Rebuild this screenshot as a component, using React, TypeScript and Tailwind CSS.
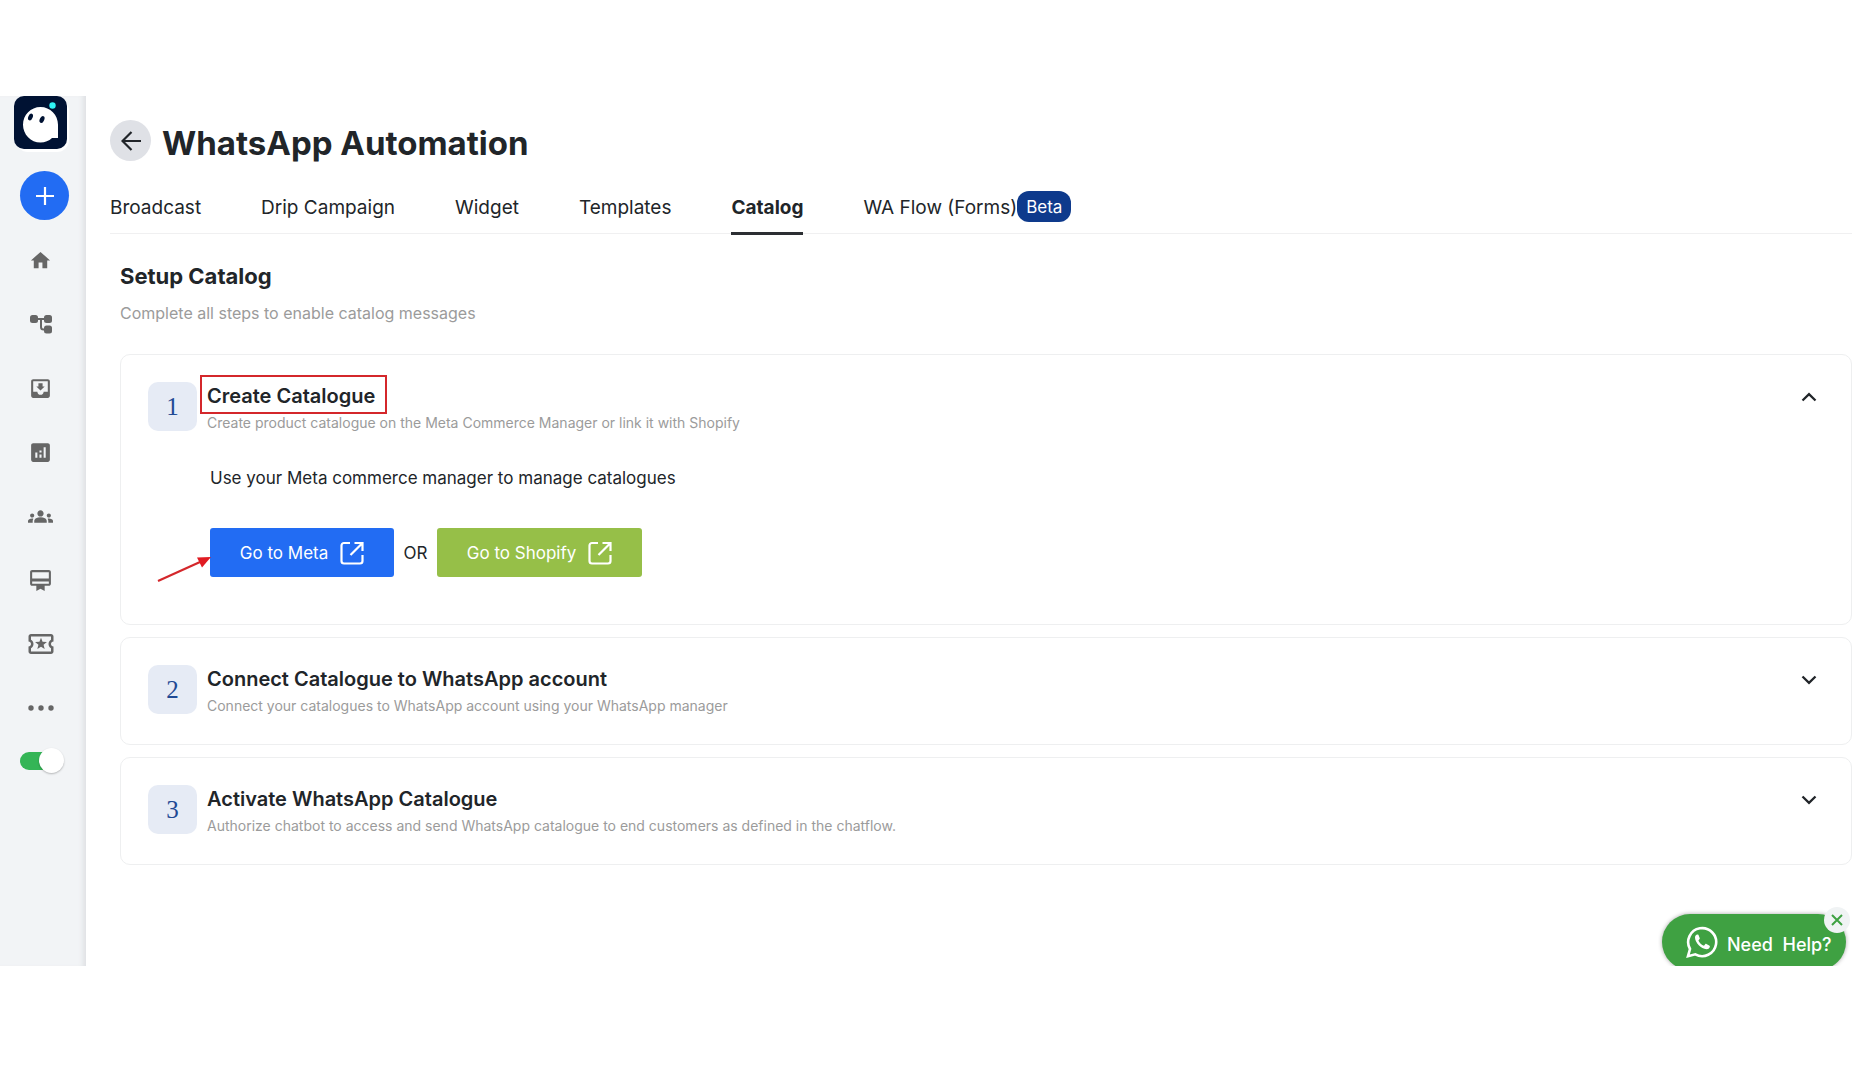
import { useState } from "react";
import {
  MdAnalytics,
  MdGroups,
  MdHome,
  MdOutlineCardMembership,
  MdOutlineLocalActivity,
  MdMoveToInbox,
} from "react-icons/md";

const tabs = ["Broadcast", "Drip Campaign", "Widget", "Templates", "Catalog", "WA Flow (Forms)"];

const steps = [
  {
    title: "Create Catalogue",
    text: "Create product catalogue on the Meta Commerce Manager or link it with Shopify",
  },
  {
    title: "Connect Catalogue to WhatsApp account",
    text: "Connect your catalogues to WhatsApp account using your WhatsApp manager",
  },
  {
    title: "Activate WhatsApp Catalogue",
    text: "Authorize chatbot to access and send WhatsApp catalogue to end customers as defined in the chatflow.",
  },
];

function FlowIcon() {
  return (
    <svg viewBox="0 0 22 20" className="w-[22px] h-5" fill="#666">
      <rect x="0" y="1" width="8" height="8" rx="2.500" />
      <rect x="14" y="1" width="8" height="8" rx="2.500" />
      <rect x="14" y="11.500" width="8" height="8" rx="2.500" />
      <path d="M7 5h8M11 5v8q0 2.500 2.500 2.500h1.500" fill="none" stroke="#666" strokeWidth="2" />
    </svg>
  );
}

function DotsIcon() {
  return (
    <svg viewBox="0 0 26 6" className="w-[26px] h-[6px]" fill="#666">
      <circle cx="3" cy="3" r="2.700" />
      <circle cx="13" cy="3" r="2.700" />
      <circle cx="23" cy="3" r="2.700" />
    </svg>
  );
}

const menu = [
  { name: "Home", icon: <MdHome size={23} /> },
  { name: "Flows", icon: <FlowIcon /> },
  { name: "Inbox", icon: <MdMoveToInbox size={25} /> },
  { name: "Analytics", icon: <MdAnalytics size={25} /> },
  { name: "Contacts", icon: <MdGroups size={25} /> },
  { name: "Plans", icon: <MdOutlineCardMembership size={25} /> },
  { name: "Offers", icon: <MdOutlineLocalActivity size={30} /> },
  { name: "More", icon: <DotsIcon /> },
];

function Logo() {
  return (
    <svg viewBox="0 0 53 53" className="block w-[53px] h-[53px]">
      <rect width="53" height="53" rx="10" fill="#001233" />
      <path
        d="M26.500 11C16.800 11 9 19 9 28.700S16.800 46.500 26.500 46.500c4.500 0 8.500-1.700 11.500-4.500h6V28.700C44 19 36.200 11 26.500 11z"
        fill="#fff"
      />
      <ellipse cx="16.500" cy="21" rx="2.200" ry="3.600" transform="rotate(22 16.500 21)" fill="#001233" />
      <ellipse cx="28" cy="23.500" rx="2.200" ry="3.600" transform="rotate(25 28 23.500)" fill="#001233" />
      <circle cx="38.500" cy="9.500" r="3.200" fill="#2ff3f5" />
    </svg>
  );
}

function ExternalIcon() {
  return (
    <svg viewBox="0 0 24 24" className="w-6 h-6" fill="none" stroke="currentColor" strokeWidth="2.200">
      <path d="M10 2H4a2.500 2.500 0 0 0-2.500 2.500V20A2.500 2.500 0 0 0 4 22.500h16a2.500 2.500 0 0 0 2.500-2.500v-6" />
      <path d="M14.500 2h8v8M22 2.500 10.500 14" />
    </svg>
  );
}

function Chevron({ open }: { open: boolean }) {
  return (
    <svg viewBox="0 0 16 10" className="w-4 h-[10px]" fill="none" stroke="#212529" strokeWidth="2.300">
      <path d={open ? "M1.500 8.500 8 2.200l6.500 6.300" : "M1.500 1.500 8 7.800l6.500-6.300"} />
    </svg>
  );
}

function Sidebar() {
  const [active, setActive] = useState(true);

  return (
    <aside className="w-[86px] shrink-0 bg-[#f2f4f6] shadow-[inset_-6px_0_5px_-3px_#dfe1e4] flex flex-col text-[#666]">
      <a href="#" aria-label="Dashboard" className="ml-[14px] w-[53px] rounded-[12px] shadow-[2px_3px_0_#fff]">
        <Logo />
      </a>
      <button
        aria-label="Add"
        className="ml-5 mt-[22px] w-[49px] h-[49px] rounded-full bg-[#226cf3] flex items-center justify-center"
      >
        <svg viewBox="0 0 18 18" className="w-[18px] h-[18px]" stroke="#fff" strokeWidth="2.200">
          <path d="M9 0v18M0 9h18" />
        </svg>
      </button>
      <nav className="mt-2 w-[81px] flex flex-col">
        {menu.map((item) => (
          <a key={item.name} href="#" aria-label={item.name} className="h-16 flex items-center justify-center">
            {item.icon}
          </a>
        ))}
      </nav>
      <label className="ml-5 mt-2 w-[46px] h-[26px] flex items-center relative">
        <input
          type="checkbox"
          aria-label="Chatbot active"
          checked={active}
          onChange={(e) => setActive(e.target.checked)}
          className="appearance-none w-10 h-[18px] rounded-full bg-gray-400 checked:bg-[#34b556]"
        />
        <span className="absolute right-[2px] top-0 w-[25px] h-[25px] rounded-full bg-white shadow-[0_1px_2px_rgba(0,0,0,0.25)]" />
      </label>
    </aside>
  );
}

export default function App() {
  const [tab, setTab] = useState("Catalog");
  const [openStep, setOpenStep] = useState(0);

  return (
    <div className="min-h-screen flex bg-white pt-24 pb-[114px] font-['Inter',sans-serif] text-[#212529]">
      <Sidebar />
      <main className="flex-1 min-w-0 relative pl-6 pr-[14px] pt-6">
        <header className="flex items-start gap-[11px]">
          <button
            aria-label="Back"
            className="w-[41px] h-[41px] rounded-full bg-[#dfe1e6] flex items-center justify-center"
          >
            <svg viewBox="0 0 20 20" className="w-5 h-5" fill="none" stroke="#212529" strokeWidth="2.200">
              <path d="M20 10H1.500M10.500 1 1.500 10l9 9" />
            </svg>
          </button>
          <h1 className="text-[33px] leading-[46px] font-bold">WhatsApp Automation</h1>
        </header>

        <nav className="mt-[15px] h-[53px] flex gap-[60px] border-b border-[#f0f0f1]">
          {tabs.map((name) => (
            <div key={name} className="flex items-start">
              <button
                onClick={() => setTab(name)}
                className={
                  name === tab
                    ? "h-[54px] pt-1 text-[19px] font-bold border-b-3 border-[#2c2f33]"
                    : "h-[54px] pt-1 text-[19px] border-b-3 border-transparent"
                }
              >
                {name}
              </button>
              {name === "WA Flow (Forms)" && (
                <span className="mt-[10px] h-[31px] px-[9px] rounded-[12px] bg-[#0e3a8c] text-white text-[17px] leading-[33px]">
                  Beta
                </span>
              )}
            </div>
          ))}
        </nav>

        <section className="pl-[10px]">
          <h2 className="mt-[26px] text-[22px] leading-8 font-bold">Setup Catalog</h2>
          <p className="mt-[9px] text-[16px] leading-6 text-[#9b9b9b]">Complete all steps to enable catalog messages</p>

          <div className="mt-[29px] flex flex-col gap-3">
            {steps.map((step, index) => (
              <article key={step.title} className="border border-[#eeeff0] rounded-[10px] px-[27px]">
                <div className="flex h-[106px] pt-[27px]">
                  <span className="w-[49px] h-[49px] shrink-0 rounded-[10px] bg-[#e6ebf5] text-[#1f4a94] font-['Liberation_Serif',serif] text-[25px] leading-[49px] text-center">
                    {index + 1}
                  </span>
                  <div className="ml-[10px] relative">
                    <h3 className="text-[20px] leading-[28px] font-semibold">{step.title}</h3>
                    <p className="text-[14px] leading-[26px] text-[#9b9b9b]">{step.text}</p>
                    {index === 0 && (
                      <span className="absolute -left-[7px] -top-[7px] w-[187px] h-[39px] border-2 border-[#d4272b]" />
                    )}
                  </div>
                  <button
                    aria-label={openStep === index ? "Collapse" : "Expand"}
                    onClick={() => setOpenStep(openStep === index ? -1 : index)}
                    className="ml-auto mr-[7px] h-[30px] flex items-center"
                  >
                    <Chevron open={openStep === index} />
                  </button>
                </div>
                {index === 0 && openStep === 0 && (
                  <div className="ml-[62px] h-[163px]">
                    <p className="pt-[5px] text-[17px] leading-6">Use your Meta commerce manager to manage catalogues</p>
                    <div className="mt-[38px] flex items-center relative">
                      <a
                        href="#"
                        className="w-[184px] h-[49px] rounded-[3px] bg-[#226cf3] text-white text-[17px] flex items-center justify-center gap-3"
                      >
                        <span className="pt-[2px]">Go to Meta</span>
                        <ExternalIcon />
                      </a>
                      <span className="w-[43px] pt-[2px] text-center text-[17px]">OR</span>
                      <a
                        href="#"
                        className="w-[205px] h-[49px] rounded-[3px] bg-[#96bf48] text-white text-[17px] flex items-center justify-center gap-3"
                      >
                        <span className="pt-[2px]">Go to Shopify</span>
                        <ExternalIcon />
                      </a>
                      <svg viewBox="0 0 54 30" className="absolute -left-[53px] top-[25px] w-[54px] h-[30px]">
                        <path d="M1 28 43 9" stroke="#d4272b" strokeWidth="2.200" />
                        <path d="M54 4 40 4.500l5 10z" fill="#e01b22" />
                      </svg>
                    </div>
                  </div>
                )}
              </article>
            ))}
          </div>
        </section>

        <div className="absolute bottom-0 right-4 w-[192px] h-[62px] overflow-hidden">
          <button className="absolute left-1 top-[10px] w-[184px] h-[56px] rounded-[28px] bg-[#3fa142] text-white shadow-[0_0_4px_rgba(0,0,0,0.35)] flex items-center pl-6 gap-[9px]">
            <svg viewBox="0 0 32 32" className="w-8 h-8 shrink-0" fill="none" stroke="#fff" strokeWidth="2.600">
              <path d="M2 30.200 4 23A14 14 0 1 1 9.300 28.300z" />
              <path
                d="M11.500 8.500c-1.500 0-2.600 1.500-2.500 3.300.3 5 6 11 11.500 11.500 1.800.1 3.300-1.200 3.400-2.800 0-.6-.2-.8-.7-1.100l-2.800-1.500c-.5-.2-.9-.1-1.200.3l-1.200 1.500c-2.500-1-4.500-2.900-5.600-5.300l1.200-1.400c.2-.3.3-.6.1-1l-1.200-2.900c-.2-.5-.5-.6-1-.6z"
                fill="#fff"
                stroke="none"
              />
            </svg>
            <span className="text-[18px] font-medium whitespace-pre pt-1">Need  Help?</span>
          </button>
          <button
            aria-label="Close"
            className="absolute right-0 top-[3px] w-[26px] h-[26px] rounded-full bg-[#f0f3f4] flex items-center justify-center"
          >
            <svg viewBox="0 0 12 12" className="w-3 h-3" stroke="#3fa142" strokeWidth="2">
              <path d="M1 1l10 10M11 1 1 11" />
            </svg>
          </button>
        </div>
      </main>
    </div>
  );
}
